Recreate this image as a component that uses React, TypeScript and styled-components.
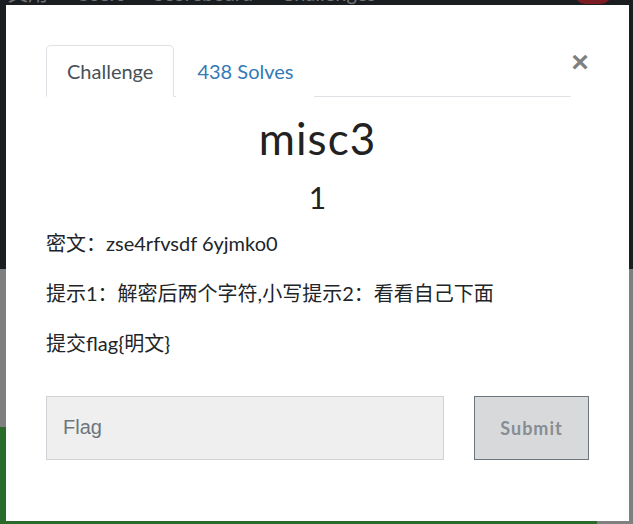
import styled, { createGlobalStyle } from 'styled-components';

const GlobalStyle = createGlobalStyle`
  html, body {
    margin: 0;
    padding: 0;
    height: 100%;
    overflow: hidden;
  }
  body {
    font-family: Lato, "Noto Sans CJK SC", sans-serif;
  }
`;

const Page = styled.div`
  height: 100vh;
  display: flex;
  flex-direction: column;
`;

const TopBand = styled.div`
  height: 269px;
  background: #1b1e21;
  display: flex;
  align-items: flex-start;
  padding: 0 20px 0 0;
  overflow: hidden;
`;

const NavItems = styled.div`
  display: flex;
  gap: 28px;
  margin-top: -19px;
  font-size: 20px;
  line-height: 24px;
  color: #6f7377;
  flex: 1;
`;

const Pill = styled.div`
  width: 36px;
  height: 22px;
  margin-top: -18px;
  margin-right: 2px;
  border-radius: 10px;
  background: #7a1c22;
`;

const GreyBand = styled.div`
  height: 158px;
  background: #7f7f7f;
`;

const GreenBand = styled.div`
  flex: 1;
  display: flex;
`;

const Green = styled.div`
  flex: 1;
  background: #2a6b2c;
`;

const GreyEdge = styled.div`
  width: 36px;
  background: #7f7f7f;
`;

const Modal = styled.div`
  position: fixed;
  top: 5px;
  left: 6px;
  width: 623px;
  height: 516px;
  box-sizing: border-box;
  background: #fff;
  padding: 40px 40px 0 40px;
  color: #212529;
`;

const Header = styled.div`
  display: flex;
  align-items: flex-start;
`;

const Tabs = styled.div`
  flex: 1;
  display: flex;
  border-bottom: 1px solid #dee2e6;
`;

const Tab = styled.div<{ $active?: boolean }>`
  padding: 10px 20px;
  margin-right: 2px;
  margin-bottom: -1px;
  line-height: 30px;
  font-size: 20px;
  border: 1px solid ${(p) => (p.$active ? '#dee2e6' : 'transparent')};
  border-bottom-color: ${(p) => (p.$active ? '#fff' : 'transparent')};
  border-radius: 5px 5px 0 0;
  color: ${(p) => (p.$active ? '#495057' : '#337ab7')};
  background: #fff;
`;

const Close = styled.div`
  width: 18px;
  margin-top: 2px;
  font-family: "Liberation Sans", Arial, sans-serif;
  font-size: 30px;
  font-weight: 700;
  line-height: 30px;
  color: #7f7f7f;
  text-align: center;
`;

const Title = styled.h3`
  margin: 15px 0 0;
  text-align: center;
  font-size: 44px;
  font-weight: 400;
  letter-spacing: 1px;
  line-height: 1.2;
  color: #222;
`;

const Value = styled.h4`
  margin: 14px 0 0;
  text-align: center;
  font-size: 30px;
  font-weight: 400;
  line-height: 1.2;
  color: #222;
`;

const Description = styled.div`
  margin-top: 13px;
  font-size: 20px;
  line-height: 30px;

  p {
    margin: 0 0 20px;
  }
`;

const Form = styled.div`
  display: flex;
  margin-top: 38px;
  gap: 30px;
`;

const FlagInput = styled.input`
  flex: 1;
  height: 64px;
  box-sizing: border-box;
  background: #efefef;
  border: 1px solid #cfd2d6;
  padding: 0 16px;
  font-family: "Liberation Sans", Arial, sans-serif;
  font-size: 20px;
  color: #495057;
  outline: none;

  &::placeholder {
    color: #6c757d;
  }
`;

const SubmitButton = styled.button`
  width: 115px;
  height: 64px;
  box-sizing: border-box;
  background: #d8d9db;
  border: 1px solid #6c757d;
  font-family: Lato, sans-serif;
  font-size: 18px;
  font-weight: 700;
  letter-spacing: 1px;
  color: #878d93;
`;

export default function App() {
  return (
    <>
      <GlobalStyle />
      <Page>
        <TopBand>
          <NavItems>
            <span style={{ marginLeft: -12 }}>中文用</span>
            <span>Users</span>
            <span>Scoreboard</span>
            <span>Challenges</span>
          </NavItems>
          <Pill />
        </TopBand>
        <GreyBand />
        <GreenBand>
          <Green />
          <GreyEdge />
        </GreenBand>
      </Page>

      <Modal>
        <Header>
          <Tabs>
            <Tab $active>Challenge</Tab>
            <Tab>438 Solves</Tab>
          </Tabs>
          <Close>×</Close>
        </Header>
        <Title>misc3</Title>
        <Value>1</Value>
        <Description>
          <p>密文：zse4rfvsdf 6yjmko0</p>
          <p>提示1：解密后两个字符,小写提示2：看看自己下面</p>
          <p>提交flag{'{'}明文{'}'}</p>
        </Description>
        <Form>
          <FlagInput placeholder="Flag" />
          <SubmitButton>Submit</SubmitButton>
        </Form>
      </Modal>
    </>
  );
}
